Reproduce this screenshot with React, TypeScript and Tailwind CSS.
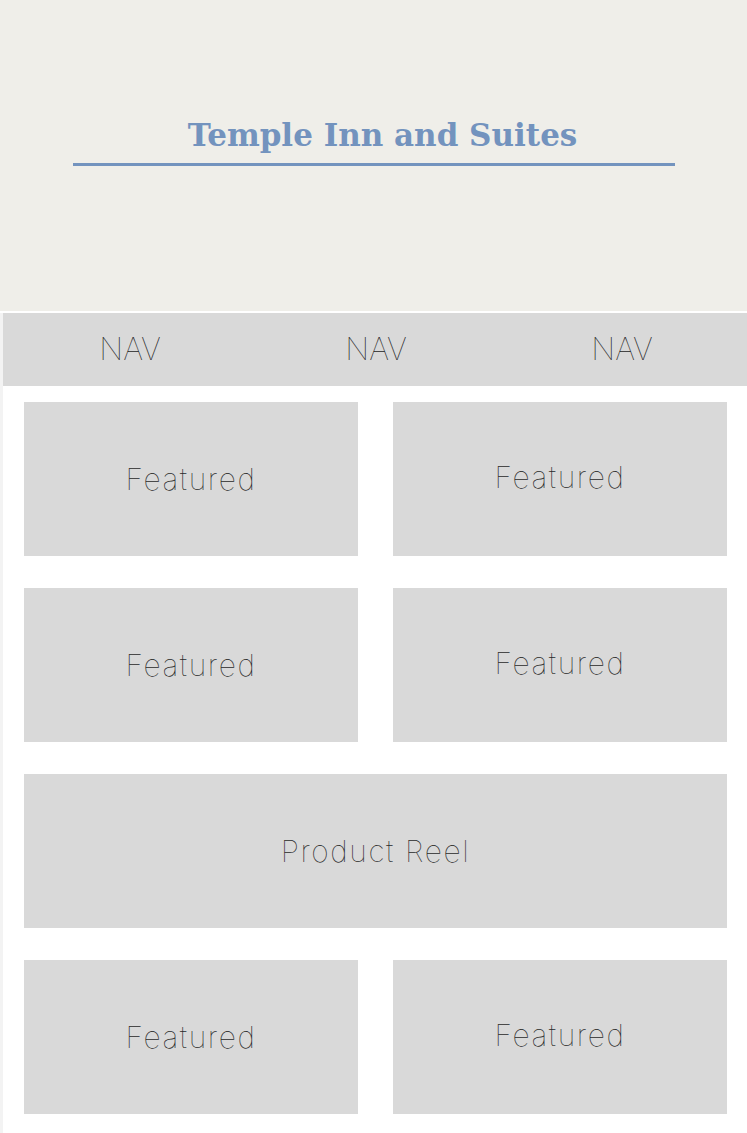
import React from 'react';

const NAV_ITEMS = ["NAV", "NAV", "NAV"];

function Card({ label, wide = false, right = false }: { label: string; wide?: boolean; right?: boolean }) {
  return (
    <div
      className={`h-[154px] bg-[#d9d9d9] flex items-center justify-center ${wide ? "col-span-2" : ""} ${right ? "pb-1" : ""}`}
    >
      <span className="text-[30px] font-thin text-[#2a2a2a] tracking-[1.6px]">{label}</span>
    </div>
  );
}

export default function App() {
  return (
    <div className="min-h-screen bg-white" style={{ fontFamily: 'Inter, Roboto, sans-serif' }}>
      <header className="h-[311px] bg-[#efeee9] flex flex-col items-center pt-[115px]">
        <h1
          className="text-[31px] font-bold text-[#7393be] leading-[40px] pl-[18px]"
          style={{ fontFamily: '"DejaVu Serif", "Liberation Serif", serif' }}
        >
          Temple Inn and Suites
        </h1>
        <div className="w-[602px] h-[3px] bg-[#7393be] mt-[8px]" />
      </header>

      <div className="mt-[2px] bg-white border-l-[3px] border-[#f3f3f3]">
        <nav className="h-[73px] bg-[#d9d9d9] grid grid-cols-3 items-center pl-[4px] pr-[2px]">
          {NAV_ITEMS.map((n, i) => (
            <div key={i} className="text-center text-[31px] font-thin text-[#1e1e1e]">{n}</div>
          ))}
        </nav>

        <main className="grid grid-cols-2 gap-x-[35px] gap-y-[32px] pt-[16px] pl-[21px] pr-[20px] pb-[19px]">
          <Card label="Featured" />
          <Card label="Featured" right />
          <Card label="Featured" />
          <Card label="Featured" right />
          <Card label="Product Reel" wide />
          <Card label="Featured" />
          <Card label="Featured" right />
        </main>
      </div>
    </div>
  );
}
